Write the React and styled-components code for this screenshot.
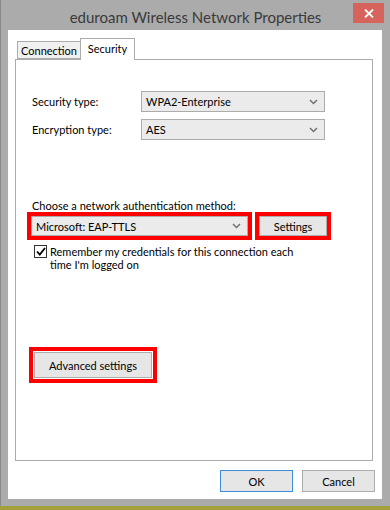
import styled, { createGlobalStyle } from 'styled-components';

const GlobalStyle = createGlobalStyle`
  html, body {
    margin: 0;
    padding: 0;
    background: #a3a13d;
  }
  body {
    font-family: Lato, "Open Sans", sans-serif;
    font-size: 11px;
    color: #000;
  }
  * { box-sizing: border-box; }
`;

const Window = styled.div`
  width: 390px;
  height: 506px;
  background: #ababab;
  border-left: 1px solid #8a8a8a;
  display: flex;
  flex-direction: column;
`;

const TitleBar = styled.div`
  height: 32px;
  display: grid;
  grid-template-columns: 1fr auto 1fr;
  align-items: start;
`;

const Title = styled.div`
  grid-column: 2;
  padding-top: 7px;
  font-size: 15px;
  color: #3a3a3a;
  line-height: 20px;
`;

const CloseButton = styled.div`
  grid-column: 3;
  justify-self: end;
  margin: 3px 6px 0 0;
  width: 31px;
  height: 20px;
  background: #d7645c;
  display: flex;
  align-items: center;
  justify-content: center;
`;

const Client = styled.div`
  flex: 1;
  margin: 0 8px 7px 7px;
  background: #fff;
  display: flex;
  flex-direction: column;
  padding: 8px 9px 7px 7px;
`;

const TabRow = styled.div`
  display: flex;
  align-items: flex-end;
  padding-left: 2px;
  position: relative;
  z-index: 1;
`;

const Tab = styled.div`
  width: ${p => (p.$active ? '55px' : '64px')};
  height: ${p => (p.$active ? '22px' : '18px')};
  padding-top: ${p => (p.$active ? '2px' : '1px')};
  text-align: center;
  background: ${p => (p.$active ? '#fff' : '#f0f0f0')};
  border: 1px solid #acacac;
  border-bottom: ${p => (p.$active ? 'none' : '1px solid #acacac')};
  margin-left: ${p => (p.$active ? '-1px' : '0')};
  margin-bottom: ${p => (p.$active ? '-1px' : '0')};
  line-height: 15px;
  white-space: nowrap;
`;

const Panel = styled.div`
  height: 402px;
  border: 1px solid #acacac;
  display: flex;
  flex-direction: column;
  padding: 31px 0 0 16px;
`;

const FieldRow = styled.div`
  display: flex;
  align-items: center;
  margin-bottom: 7px;
`;

const Label = styled.div`
  width: 109px;
`;

const Select = styled.div`
  width: ${p => p.$width}px;
  height: ${p => p.$height || 21}px;
  background: #ebebeb;
  border: 1px solid #acacac;
  display: flex;
  align-items: center;
  justify-content: space-between;
  padding: 0 6px 0 4px;
  white-space: nowrap;
`;

const Chevron = () => (
  <svg width="9" height="6" viewBox="0 0 9 6">
    <path d="M1 1 L4.5 4.5 L8 1" fill="none" stroke="#707070" strokeWidth="1.5" />
  </svg>
);

const Caption = styled.div`
  margin-top: 52px;
  line-height: 13px;
`;

const AuthRow = styled.div`
  display: flex;
  gap: 3px;
  margin-left: -5px;
`;

const Highlight = styled.div`
  border: 4px solid #ff0000;
  padding: ${p => p.$pad || 0}px;
  background: #fff;
`;

const Button = styled.div`
  width: ${p => p.$width}px;
  height: ${p => p.$height}px;
  background: #e6e6e6;
  border: 1px solid ${p => (p.$default ? '#3c8fd6' : '#adadad')};
  display: flex;
  align-items: center;
  justify-content: center;
  white-space: nowrap;
`;

const CheckRow = styled.div`
  display: flex;
  align-items: flex-start;
  gap: 3px;
  margin: 5px 0 0 2px;
  line-height: 13px;
`;

const CheckBox = styled.div`
  width: 13px;
  height: 13px;
  border: 1px solid #333;
  background: #fff;
  display: flex;
  align-items: center;
  justify-content: center;
  flex-shrink: 0;
`;

const AdvancedWrap = styled.div`
  margin-top: 76px;
  margin-left: -3px;
  align-self: flex-start;
`;

const Footer = styled.div`
  display: flex;
  justify-content: flex-end;
  gap: 9px;
  margin: 9px -2px 0 0;
`;

export default function App() {
  return (
    <>
      <GlobalStyle />
      <Window>
        <TitleBar>
          <Title>eduroam Wireless Network Properties</Title>
          <CloseButton>
            <svg width="10" height="9" viewBox="0 0 10 9">
              <path d="M1 0.5 L9 8.5 M9 0.5 L1 8.5" stroke="#fff" strokeWidth="1.8" />
            </svg>
          </CloseButton>
        </TitleBar>
        <Client>
          <TabRow>
            <Tab>Connection</Tab>
            <Tab $active>Security</Tab>
          </TabRow>
          <Panel>
            <FieldRow>
              <Label>Security type:</Label>
              <Select $width={184}>
                WPA2-Enterprise
                <Chevron />
              </Select>
            </FieldRow>
            <FieldRow>
              <Label>Encryption type:</Label>
              <Select $width={184}>
                AES
                <Chevron />
              </Select>
            </FieldRow>
            <Caption>Choose a network authentication method:</Caption>
            <AuthRow>
              <Highlight>
                <Select $width={217} $height={20}>
                  Microsoft: EAP-TTLS
                  <Chevron />
                </Select>
              </Highlight>
              <Highlight>
                <Button $width={68} $height={20}>Settings</Button>
              </Highlight>
            </AuthRow>
            <CheckRow>
              <CheckBox>
                <svg width="10" height="9" viewBox="0 0 10 9">
                  <path d="M1 4.5 L3.8 7.5 L9 1" fill="none" stroke="#000" strokeWidth="1.8" />
                </svg>
              </CheckBox>
              <div>
                Remember my credentials for this connection each
                <br />
                time I'm logged on
              </div>
            </CheckRow>
            <AdvancedWrap>
              <Highlight $pad={1}>
                <Button $width={118} $height={26}>Advanced settings</Button>
              </Highlight>
            </AdvancedWrap>
          </Panel>
          <Footer>
            <Button $width={73} $height={22} $default>OK</Button>
            <Button $width={73} $height={22}>Cancel</Button>
          </Footer>
        </Client>
      </Window>
    </>
  );
}
